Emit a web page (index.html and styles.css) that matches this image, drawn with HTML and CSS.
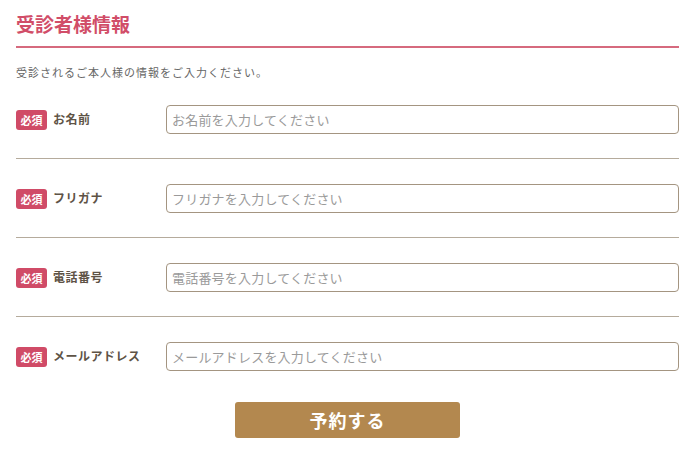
FILE: index.html
```html
<!DOCTYPE html>
<html lang="ja">
<head>
<meta charset="utf-8">
<link rel="stylesheet" href="styles.css">
</head>
<body>
<div class="page">
  <h2 class="title">受診者様情報</h2>
  <p class="desc">受診されるご本人様の情報をご入力ください。</p>
  <div class="row">
    <div class="label"><span class="badge">必須</span><span class="name">お名前</span></div>
    <input class="field" type="text" placeholder="お名前を入力してください">
  </div>
  <div class="row">
    <div class="label"><span class="badge">必須</span><span class="name">フリガナ</span></div>
    <input class="field" type="text" placeholder="フリガナを入力してください">
  </div>
  <div class="row">
    <div class="label"><span class="badge">必須</span><span class="name">電話番号</span></div>
    <input class="field" type="text" placeholder="電話番号を入力してください">
  </div>
  <div class="row last">
    <div class="label"><span class="badge">必須</span><span class="name">メールアドレス</span></div>
    <input class="field" type="text" placeholder="メールアドレスを入力してください">
  </div>
  <div class="actions"><button class="submit" type="button">予約する</button></div>
</div>
</body>
</html>
```
FILE: styles.css
```css
* { box-sizing: border-box; }
html, body { margin: 0; padding: 0; background: #fff; }
body { font-family: "Noto Sans CJK JP", "Noto Sans", sans-serif; }
.page { padding: 0 21px 0 16px; }
.title {
  margin: 0;
  padding: 10px 0 8px;
  font-size: 19px;
  line-height: 28px;
  font-weight: bold;
  color: #d14d68;
  border-bottom: 2px solid #d66a7e;
}
.desc {
  margin: 16px 0 0;
  font-size: 11px;
  line-height: 16px;
  color: #666;
  letter-spacing: 1px;
}
.row {
  display: flex;
  align-items: center;
  padding: 25px 0 24px;
  border-bottom: 1px solid #b5ab9c;
}
.row.last { border-bottom: none; }
.label {
  width: 150px;
  flex: none;
  display: flex;
  align-items: center;
}
.badge {
  width: 31px;
  height: 20px;
  border-radius: 3px;
  background: #d04b67;
  color: #fff;
  font-size: 11px;
  font-weight: bold;
  line-height: 20px;
  text-align: center;
  margin-right: 6px;
}
.name {
  font-size: 12px;
  font-weight: bold;
  color: #5e5346;
  letter-spacing: 0.5px;
  margin-top: -2px;
}
.field {
  flex: 1;
  height: 29px;
  border: 1px solid #a49581;
  border-radius: 4px;
  padding: 0 5px;
  font-family: "Noto Sans CJK JP", "Noto Sans", sans-serif;
  font-size: 13px;
  color: #333;
  outline: none;
}
.field::placeholder { color: #9a9a9a; letter-spacing: 0.2px; }
.actions { display: flex; justify-content: center; padding-top: 7px; }
.submit {
  width: 225px;
  height: 36px;
  border: none;
  border-radius: 3px;
  background: #b3884f;
  color: #fff;
  font-family: "Noto Sans CJK JP", "Noto Sans", sans-serif;
  font-size: 18px;
  font-weight: bold;
  letter-spacing: 1px;
}
```
